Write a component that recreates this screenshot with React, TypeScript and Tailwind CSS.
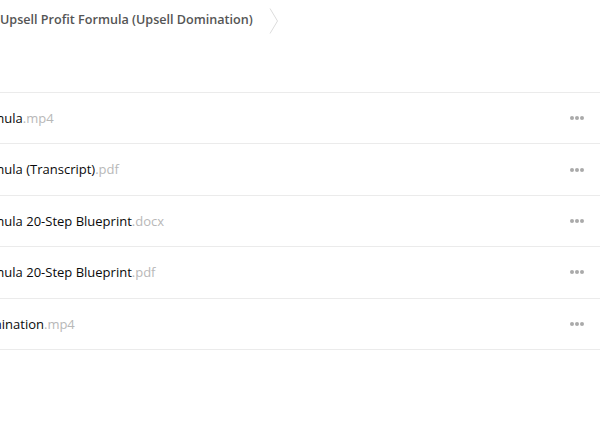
const files = [
  { name: "Upsell Profit Formula", ext: ".mp4" },
  { name: "Upsell Profit Formula (Transcript)", ext: ".pdf" },
  { name: "Upsell Profit Formula 20-Step Blueprint", ext: ".docx" },
  { name: "Upsell Profit Formula 20-Step Blueprint", ext: ".pdf" },
  { name: "Upsell Profit Domination", ext: ".mp4" },
];

const App = () => {
  return (
    <div className="h-[422px] w-[600px] overflow-hidden bg-white font-['Open_Sans',sans-serif]">
      {/* Breadcrumb */}
      <div className="flex h-[92px] items-start">
        <div className="flex h-[40px] items-center gap-[16px]">
          <span className="text-[12.6px] font-semibold text-[#555]">
            Upsell Profit Formula (Upsell Domination)
          </span>
          <svg width="10" height="26" viewBox="0 0 10 26" className="mt-[1px]">
            <path d="M1 0.5 L8.5 13 L1 25.5" fill="none" stroke="#dcdcdc" strokeWidth="1" />
          </svg>
        </div>
      </div>

      {/* File list */}
      <div className="border-t border-[#ebebeb]">
        {files.map((f, i) => (
          <div
            key={i}
            className="flex h-[51.4px] items-center justify-between border-b border-[#ebebeb] pr-[16px]"
          >
            <span className="-ml-[105px] mt-[1px] whitespace-nowrap text-[13px] text-[#0a0a0a]">
              {f.name}
              <span className="text-[#b8b8b8]">{f.ext}</span>
            </span>
            <span className="flex gap-[1px]">
              <span className="h-[4px] w-[4px] rounded-full bg-[#aaa]" />
              <span className="h-[4px] w-[4px] rounded-full bg-[#aaa]" />
              <span className="h-[4px] w-[4px] rounded-full bg-[#aaa]" />
            </span>
          </div>
        ))}
      </div>
    </div>
  );
};

export default App;
